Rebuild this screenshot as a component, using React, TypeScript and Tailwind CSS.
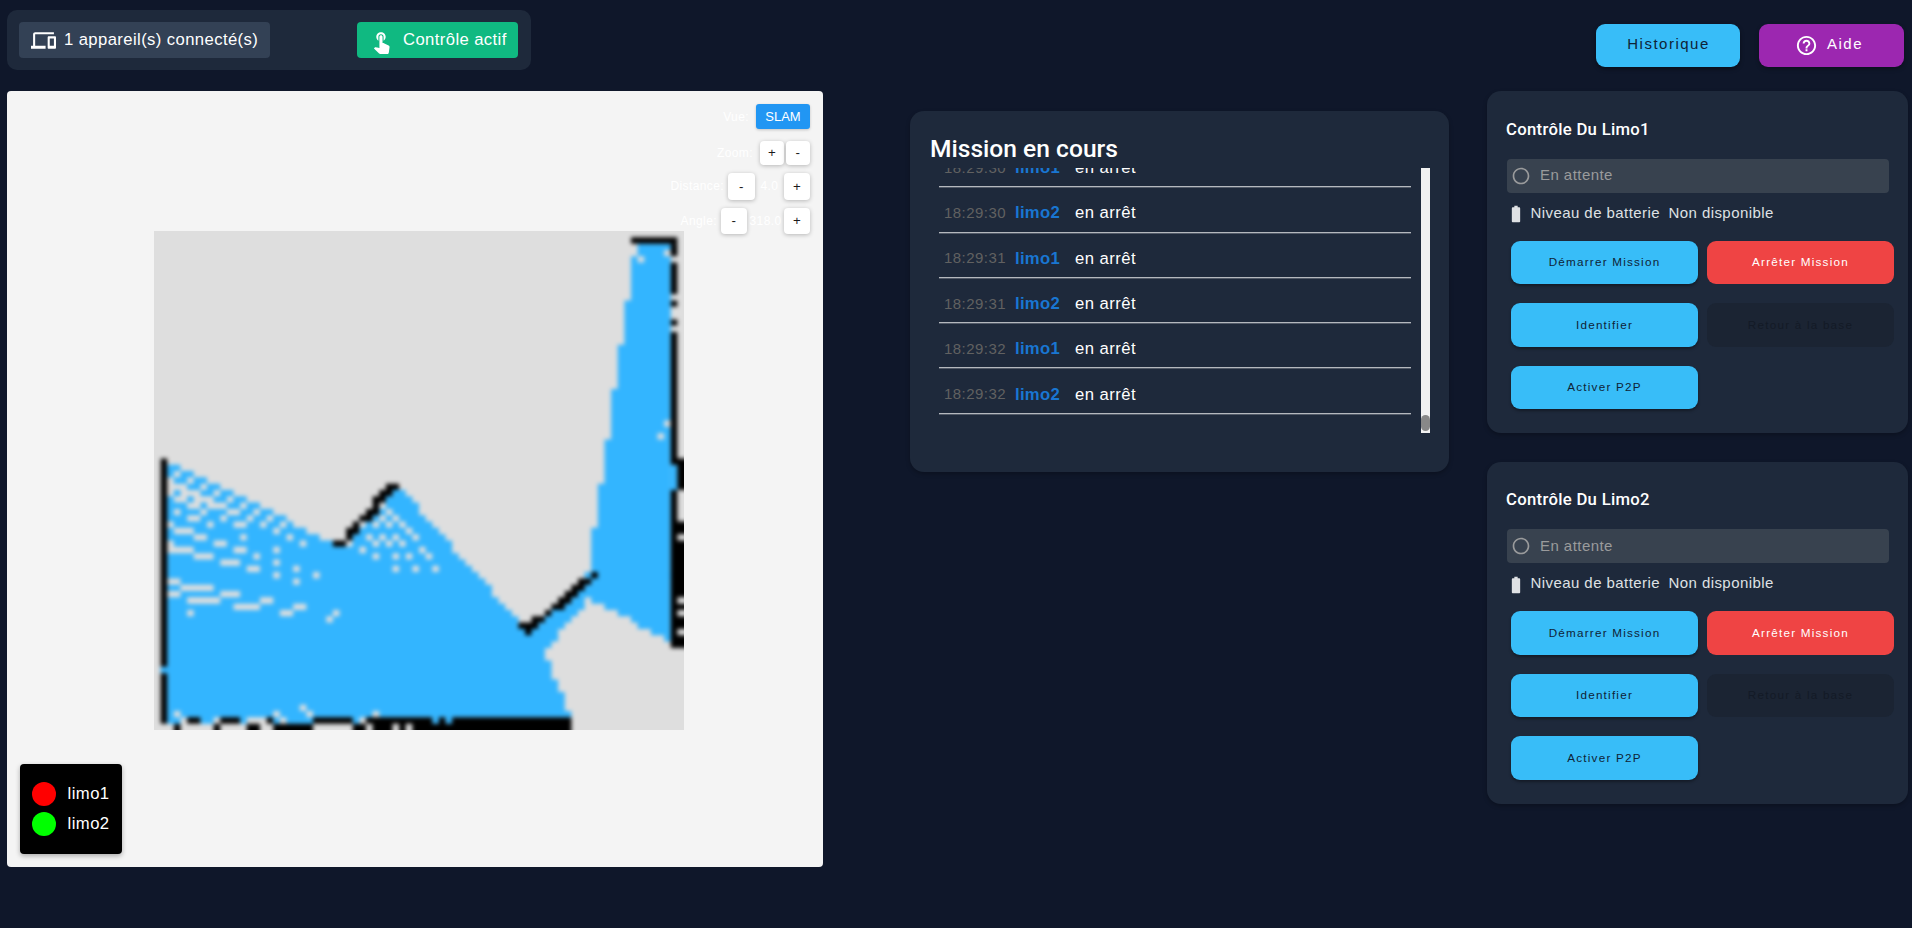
import type { ReactNode } from "react";
import { MdBatteryFull, MdDevices, MdHelpOutline, MdRadioButtonUnchecked, MdTouchApp } from "react-icons/md";

type Run = [row: number, from: number, to: number];

const COLS = 80;
const ROWS = 79;

/* Free space seen by the robots: [row, first column, last column]. */
const FREE: Run[] = [
  [37, 2, 3], [38, 2, 5], [39, 3, 7], [40, 5, 9], [41, 3, 11], [42, 2, 13], [43, 2, 15], [44, 2, 17],
  [45, 2, 19], [46, 2, 20], [47, 2, 22], [48, 2, 24], [49, 2, 26], [50, 2, 44],
  [41, 36, 37], [42, 35, 38], [43, 34, 39], [44, 34, 39], [45, 33, 40], [46, 31, 41], [47, 31, 42],
  [48, 30, 43], [49, 29, 44], [51, 2, 45], [52, 2, 46], [53, 2, 47], [54, 2, 48], [55, 2, 49],
  [56, 2, 50], [57, 2, 50], [58, 2, 51], [59, 2, 52], [60, 2, 53], [61, 2, 54], [62, 2, 54],
  [56, 65, 77], [57, 64, 77], [58, 63, 64], [58, 66, 77], [59, 62, 64], [59, 68, 77], [60, 60, 63],
  [60, 70, 77], [61, 59, 62], [61, 72, 77], [62, 58, 61], [62, 73, 77], [63, 2, 60], [63, 75, 77],
  [64, 2, 60], [64, 77, 77], [65, 2, 59], [66, 2, 58], [67, 2, 58], [68, 2, 59], [69, 1, 59],
  [70, 2, 59], [71, 2, 60], [72, 2, 60], [73, 2, 61], [74, 2, 61], [75, 2, 61], [76, 2, 62],
  [77, 2, 3], [77, 7, 8], [77, 13, 13], [77, 18, 18], [77, 20, 23], [77, 30, 30], [77, 42, 42], [77, 44, 44],
  [54, 65, 77], [55, 66, 77], [37, 78, 78], [38, 78, 78], [39, 78, 78], [40, 78, 78],
];

/* The corridor in the upper right: [first row, last row, first column], up to column 77. */
const CORRIDOR: Run[] = [
  [2, 3, 73], [4, 10, 72], [11, 17, 71], [18, 24, 70], [25, 32, 69], [33, 39, 68], [40, 46, 67], [47, 54, 66],
];

/* Cells not explored yet inside the free space. */
const UNKNOWN: Run[] = [
  [38, 3, 3], [39, 5, 5], [40, 7, 7], [41, 4, 6], [41, 9, 9], [42, 3, 4], [42, 6, 8], [42, 11, 11],
  [43, 5, 6], [43, 8, 10], [43, 13, 13], [44, 3, 3], [44, 7, 7], [44, 11, 12], [44, 15, 15],
  [45, 5, 6], [45, 10, 10], [45, 14, 14], [45, 17, 17], [46, 2, 2], [46, 8, 8], [46, 12, 13],
  [46, 16, 16], [46, 19, 19], [47, 3, 5], [47, 18, 18], [48, 6, 7], [48, 13, 13], [48, 20, 20],
  [49, 2, 2], [49, 9, 10], [49, 22, 22], [50, 2, 5], [50, 12, 13], [50, 18, 18], [51, 6, 8],
  [51, 15, 15], [52, 10, 12], [52, 18, 18], [53, 14, 15], [53, 21, 21], [54, 18, 18], [54, 24, 24],
  [55, 2, 3], [55, 21, 21], [56, 4, 8], [57, 2, 3], [57, 10, 12], [58, 5, 9], [58, 16, 17],
  [59, 12, 15], [59, 21, 22], [60, 5, 5], [60, 19, 20], [60, 27, 27], [61, 26, 26],
  [43, 34, 34], [44, 35, 35], [45, 34, 34], [45, 36, 36], [46, 31, 31], [46, 33, 33], [46, 35, 35],
  [46, 37, 37], [47, 38, 38], [48, 32, 32], [48, 34, 34], [48, 36, 36], [48, 39, 39], [49, 29, 29],
  [49, 33, 33], [49, 35, 35], [49, 37, 37], [50, 31, 31], [50, 40, 40], [51, 33, 33], [51, 36, 36],
  [51, 38, 38], [51, 41, 41], [53, 36, 36], [53, 39, 39], [53, 42, 42], [75, 22, 22], [76, 3, 3],
  [76, 18, 18], [76, 23, 23], [76, 33, 33], [3, 77, 77], [4, 73, 73], [30, 77, 77], [32, 76, 76],
];

/* Walls and obstacles. */
const WALLS: Run[] = [
  [40, 35, 36], [41, 34, 35], [42, 33, 34], [43, 33, 33], [44, 32, 33], [45, 31, 32], [46, 30, 30],
  [47, 29, 30], [48, 29, 29], [49, 27, 28], [62, 55, 57], [63, 56, 56], [61, 57, 58], [60, 59, 59],
  [59, 60, 61], [58, 61, 62], [57, 62, 63], [56, 63, 64], [55, 64, 65], [54, 66, 66], [1, 72, 78],
  [77, 5, 6], [77, 10, 12], [77, 17, 17], [77, 24, 29], [77, 32, 41], [77, 43, 43], [77, 45, 62],
  [78, 3, 3], [78, 9, 9], [78, 14, 15], [78, 18, 23], [78, 30, 31], [78, 33, 35], [78, 37, 37], [78, 39, 62],
];

/* Vertical walls: [column, first row, last row]. */
const VERTICAL: Run[] = [
  [1, 36, 68], [1, 70, 77], [78, 2, 3], [78, 5, 9], [78, 11, 11], [78, 14, 14], [78, 16, 36],
  [79, 36, 40], [78, 41, 65], [79, 46, 47], [79, 49, 57], [79, 59, 59], [79, 61, 62], [79, 64, 65],
];

function path(runs: Run[]) {
  return runs
    .map(([r, a, b]) => {
      const right = b === COLS - 1 ? b + 3 : b + 1;
      const bottom = r === ROWS - 1 ? r + 3 : r + 1;
      return `M${a} ${r}H${right}V${bottom}H${a}Z`;
    })
    .join("");
}

function verticalPath(runs: Run[]) {
  return runs
    .map(([c, a, b]) => `M${c} ${a}H${c === COLS - 1 ? c + 3 : c + 1}V${b + 1}H${c}Z`)
    .join("");
}

function OccupancyMap() {
  return (
    <svg viewBox="0 0 80 79" preserveAspectRatio="none" className="block h-[499px] w-[530px] overflow-hidden">
      <defs>
        <filter id="soft" x="-5" y="-5" width="90" height="89" filterUnits="userSpaceOnUse" colorInterpolationFilters="sRGB">
          <feGaussianBlur stdDeviation="0.31" />
        </filter>
      </defs>
      <g filter="url(#soft)">
        <rect x="-5" y="-5" width="90" height="89" fill="#dedede" />
        <path d={path(FREE)} fill="#33b5ff" />
        <path d={CORRIDOR.map(([a, b, c]) => `M${c} ${a}H78V${b + 1}H${c}Z`).join("")} fill="#33b5ff" />
        <path d={path(UNKNOWN)} fill="#dedede" />
        <path d={path(WALLS)} fill="#000" />
        <path d={verticalPath(VERTICAL)} fill="#000" />
      </g>
    </svg>
  );
}

function MapButton({ className, children }: { className: string; children: ReactNode }) {
  return (
    <button className={`flex items-center justify-center rounded-[4px] bg-white text-[13.3px] text-[#1a1a1a] shadow-[0_1px_4px_rgba(0,0,0,0.25)] ${className}`}>
      {children}
    </button>
  );
}

function MapPanel() {
  return (
    <section className="relative h-[776px] w-[816px] overflow-hidden rounded-[4px] bg-[#f4f4f4] pt-[140px] pl-[147px]">
      <OccupancyMap />
      <div className="absolute top-[13px] right-[13px] flex flex-col items-end text-[12px] tracking-[0.4px] text-white">
        <div className="flex h-[25px] items-center">
          <span className="mr-[7px]">Vue:</span>
          <button className="h-[25px] w-[54px] rounded-[3px] bg-[#2196f3] text-[13px] tracking-normal shadow-[0_1px_3px_rgba(0,0,0,0.2)]">SLAM</button>
        </div>
        <div className="mt-3 flex h-6 items-center">
          <span className="mr-[7px]">Zoom:</span>
          <MapButton className="mr-[2px] h-6 w-6">+</MapButton>
          <MapButton className="h-6 w-6">-</MapButton>
        </div>
        <div className="mt-2 flex h-[27px] items-center">
          <span className="mr-[4px] -mt-px">Distance:</span>
          <MapButton className="h-[27px] w-[27px]">-</MapButton>
          <span className="-mt-px w-[29px] text-center">4.0</span>
          <MapButton className="h-[27px] w-[26px]">+</MapButton>
        </div>
        <div className="mt-2 flex h-[26px] items-center">
          <span className="mr-[4px]">Angle:</span>
          <MapButton className="h-[26px] w-[26px]">-</MapButton>
          <span className="w-[37px] text-center">318.0</span>
          <MapButton className="h-[26px] w-[26px]">+</MapButton>
        </div>
      </div>
      <div className="absolute bottom-[13px] left-[13px] flex h-[90px] w-[102px] flex-col gap-[6px] rounded-[4px] bg-black pt-[18px] pl-3 text-[16.67px] leading-6 tracking-[0.45px] text-white shadow-[0_2px_5px_rgba(0,0,0,0.3)]">
        <div className="flex h-6 items-center gap-[11.5px]">
          <span className="size-6 rounded-full bg-[#ff0000]" />
          <span className="-mt-px">limo1</span>
        </div>
        <div className="flex h-6 items-center gap-[11.5px]">
          <span className="size-6 rounded-full bg-[#00ff00]" />
          <span className="-mt-px">limo2</span>
        </div>
      </div>
    </section>
  );
}

const LOGS = [
  ["18:29:30", "limo1"],
  ["18:29:30", "limo2"],
  ["18:29:31", "limo1"],
  ["18:29:31", "limo2"],
  ["18:29:32", "limo1"],
  ["18:29:32", "limo2"],
  ["18:29:33", "limo1"],
];

function MissionPanel() {
  return (
    <section className="mt-5 h-[361px] w-[539px] rounded-[14px] bg-[#1e293b] pt-[21px] pl-5 shadow-[0_2px_4px_rgba(0,0,0,0.25)]">
      <h2 className="h-9 font-[Roboto,sans-serif] text-[24.6px] leading-[34px] font-medium text-white">Mission en cours</h2>
      <div className="flex h-[265px] w-[500px] justify-between overflow-hidden">
        <ul className="-mt-[26px] ml-[9px] w-[472px]">
          {LOGS.map(([time, robot], i) => (
            <li key={i} className="flex h-[45.3px] items-center border-b-[1.4px] border-[#b4b8be] pt-[7px] pl-[5px] text-[16.67px] whitespace-nowrap shadow-[0_1px_0_rgba(180,184,190,0.35)]">
              <span className="w-[71px] pt-px text-[15px] tracking-[0.45px] text-[#616161]">{time}</span>
              <span className="w-[60px] font-bold tracking-[0.3px] text-[#1976d2]">{robot}</span>
              <span className="tracking-[0.45px] text-white">en arrêt</span>
            </li>
          ))}
        </ul>
        <div className="flex h-full w-[9px] flex-col justify-end bg-[#f1f1f1] pb-[2px]">
          <div className="h-4 rounded-full bg-[#888888]" />
        </div>
      </div>
    </section>
  );
}

function ActionButton({ className, children }: { className: string; children: ReactNode }) {
  return (
    <button className={`h-[43.4px] w-[187px] rounded-[9px] pb-px text-[11.7px] tracking-[1.22px] ${className}`}>{children}</button>
  );
}

const BLUE = "bg-[#38bdf8] text-[#0f2336] shadow-[0_2px_3px_rgba(0,0,0,0.35)]";

function RobotCard({ name }: { name: string }) {
  return (
    <section className="h-[342px] w-[421px] rounded-[14px] bg-[#1e293b] pt-[25.8px] pl-5 shadow-[0_2px_4px_rgba(0,0,0,0.25)]">
      <h3 className="-ml-px h-[42px] font-[Roboto,sans-serif] text-[16.7px] leading-[25.4px] font-medium tracking-[0.3px] text-white">Contrôle Du {name}</h3>
      <div className="flex h-[34px] w-[382px] items-center rounded-[4px] bg-[#38424f] pl-[4px] text-[15px] tracking-[0.45px] text-[#9a9b9c]">
        <MdRadioButtonUnchecked className="size-5" />
        <span className="ml-[9px] -mt-px">En attente</span>
      </div>
      <div className="mt-[10px] flex h-5 items-center text-[15px] tracking-[0.43px] text-[#dfe1e4]">
        <MdBatteryFull className="-ml-[1px] mt-[3px] size-[20px]" />
        <span className="ml-[4.5px]">Niveau de batterie</span>
        <span className="ml-[8.5px]">Non disponible</span>
      </div>
      <div className="mt-[18px] ml-1 grid w-[383px] grid-cols-[187px_187px] gap-x-[9px] gap-y-[19px]">
        <ActionButton className={BLUE}>Démarrer Mission</ActionButton>
        <ActionButton className="bg-[#ef4444] text-white">Arrêter Mission</ActionButton>
        <ActionButton className={BLUE}>Identifier</ActionButton>
        <ActionButton className="bg-[#1b2433] text-[#131a26]">Retour à la base</ActionButton>
        <ActionButton className={BLUE}>Activer P2P</ActionButton>
      </div>
    </section>
  );
}

export default function App() {
  return (
    <div className="h-[928px] w-[1912px] overflow-hidden bg-[#0f172a] font-['Liberation_Sans',Arial,sans-serif]">
      <header className="flex h-[91px] justify-between pt-[10px] pr-2 pl-[7px]">
        <div className="flex h-[60px] w-[524px] justify-between rounded-[10px] bg-[#1e293b] py-3 pr-[13px] pl-3 text-[16.67px] tracking-[0.4px] whitespace-nowrap text-white">
          <div className="flex h-9 w-[251px] items-center gap-2 rounded-[4px] bg-[#334155] pl-[12px]">
            <MdDevices className="size-[25px]" />
            <span className="-mt-[2px]">1 appareil(s) connecté(s)</span>
          </div>
          <div className="flex h-9 w-[161px] items-center gap-[9px] rounded-[4px] bg-[#10b981] pl-[12px]">
            <MdTouchApp className="mt-[2px] size-[25px]" />
            <span className="-mt-[2px]">Contrôle actif</span>
          </div>
        </div>
        <div className="mt-[14px] flex gap-[19px] text-[15px] tracking-[1.5px]">
          <button className="h-[43px] w-[144px] rounded-[9px] bg-[#38bdf8] pb-[2px] pl-px text-[#0f2336] shadow-[0_2px_4px_rgba(0,0,0,0.4)]">Historique</button>
          <button className="flex h-[43px] w-[145px] items-center justify-center rounded-[9px] bg-[#9c27b0] pr-[5px] text-white shadow-[0_2px_4px_rgba(0,0,0,0.3)]">
            <MdHelpOutline className="mr-[9px] size-[23px]" />
            <span className="-mt-[2px]">Aide</span>
          </button>
        </div>
      </header>
      <main className="flex pl-[7px]">
        <MapPanel />
        <div className="ml-[87px]">
          <MissionPanel />
        </div>
        <div className="ml-[38px] flex flex-col gap-[28.6px]">
          <RobotCard name="Limo1" />
          <RobotCard name="Limo2" />
        </div>
      </main>
    </div>
  );
}
